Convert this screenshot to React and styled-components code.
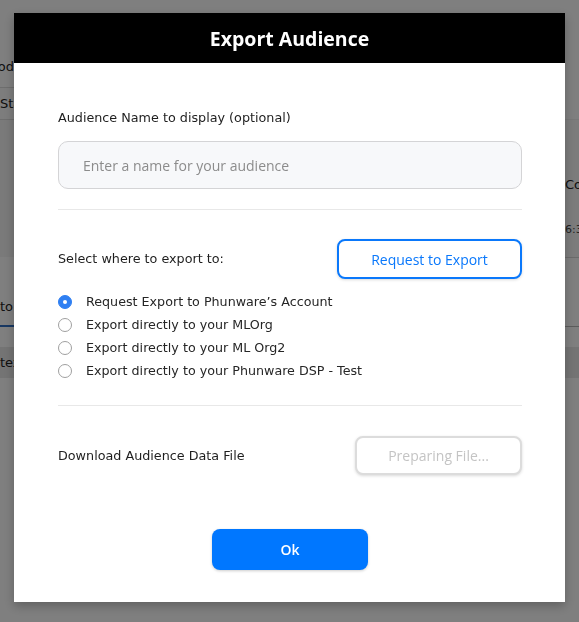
import React from "react";
import styled, { createGlobalStyle } from "styled-components";

const Global = createGlobalStyle`
  html, body { margin: 0; padding: 0; }
  body { width: 579px; height: 622px; overflow: hidden; background: #fff; font-family: "DejaVu Sans", sans-serif; }
  * { box-sizing: border-box; }
`;

/* ---------- page behind the dialog ---------- */
const Page = styled.div`
  display: flex;
  width: 579px;
  height: 622px;
  background: #fff;
`;
const Strip = styled.div`
  width: 14px;
  flex: none;
  display: flex;
  flex-direction: column;
  overflow: hidden;
`;
const Middle = styled.div`
  flex: 1;
`;
const Cell = styled.div`
  height: ${(p) => p.$h}px;
  flex: none;
  display: flex;
  align-items: ${(p) => p.$align || "center"};
  justify-content: ${(p) => (p.$end ? "flex-end" : "flex-start")};
  padding-bottom: ${(p) => p.$pb || 0}px;
  background: ${(p) => p.$bg || "#fff"};
  border-bottom: ${(p) => (p.$line ? `${p.$lw || 1}px solid ${p.$line}` : "none")};
  white-space: nowrap;
  font-family: "DejaVu Sans", sans-serif;
  font-size: ${(p) => p.$fs || 13}px;
  color: ${(p) => p.$color || "#222"};
`;
const Stack = styled.div`
  display: flex;
  flex-direction: column;
  padding-top: 57px;
  gap: 31px;
`;
const Small = styled.span`
  font-size: 11px;
  color: #444;
`;

/* ---------- dialog ---------- */
const Overlay = styled.div`
  position: fixed;
  inset: 0;
  background: rgba(0, 0, 0, 0.5);
  display: flex;
  justify-content: center;
  align-items: flex-start;
  padding-top: 13px;
`;
const Modal = styled.div`
  width: 551px;
  background: #fff;
  box-shadow: 0 4px 10px rgba(0, 0, 0, 0.25);
`;
const Header = styled.div`
  height: 50px;
  background: #000;
  color: #fff;
  display: flex;
  align-items: center;
  justify-content: center;
  font-family: "Open Sans", sans-serif;
  font-weight: 700;
  font-size: 19.5px;
`;
const Body = styled.div`
  padding: 47px 43px 32px 44px;
  display: flex;
  flex-direction: column;
`;
const Label = styled.div`
  font-family: "DejaVu Sans", sans-serif;
  font-size: 12.75px;
  line-height: 16px;
  color: #1e1e1e;
`;
const NameInput = styled.input`
  margin-top: 15px;
  height: 48px;
  width: 100%;
  border: 1px solid #d4d4d6;
  border-radius: 10px;
  background: #f7f8fa;
  padding: 0 24px;
  font-family: "Open Sans", sans-serif;
  font-size: 14px;
  color: #333;
  outline: none;
  &::placeholder { color: #8c8c8c; }
`;
const Divider = styled.hr`
  border: 0;
  border-top: 1px solid #e8e8e8;
  margin: ${(p) => p.$mt}px 0 0;
`;
const Row = styled.div`
  display: flex;
  align-items: center;
  justify-content: space-between;
  margin-top: ${(p) => p.$mt}px;
`;
const OutlineButton = styled.button`
  width: ${(p) => p.$w}px;
  height: ${(p) => p.$h}px;
  border-radius: 8px;
  background: #fff;
  border: 2px solid ${(p) => (p.disabled ? "#dcdcdc" : "#0a78fb")};
  color: ${(p) => (p.disabled ? "#c4c4c4" : "#0a78fb")};
  font-family: "Open Sans", sans-serif;
  font-size: 14px;
  font-weight: 500;
  box-shadow: 0 1px 3px rgba(0, 0, 0, 0.15);
  cursor: pointer;
`;
const RadioList = styled.div`
  margin-top: 11px;
  display: flex;
  flex-direction: column;
`;
const RadioItem = styled.label`
  height: 23px;
  display: flex;
  align-items: center;
  gap: 14px;
  font-family: "DejaVu Sans", sans-serif;
  font-size: 12.7px;
  color: #262626;
`;
const RadioDot = styled.span`
  width: 14px;
  height: 14px;
  flex: none;
  border-radius: 50%;
  display: flex;
  align-items: center;
  justify-content: center;
  background: ${(p) => (p.$on ? "#2f7ff2" : "#fff")};
  border: 1px solid ${(p) => (p.$on ? "#2f7ff2" : "#a0a0a0")};
  &::after {
    content: "";
    width: 4px;
    height: 4px;
    border-radius: 50%;
    background: #fff;
    display: ${(p) => (p.$on ? "block" : "none")};
  }
`;
const Footer = styled.div`
  display: flex;
  justify-content: center;
  margin-top: 54px;
`;
const PrimaryButton = styled.button`
  width: 156px;
  height: 41px;
  border: 0;
  border-radius: 8px;
  background: #0077ff;
  color: #fff;
  font-family: "Open Sans", sans-serif;
  font-size: 14px;
  font-weight: 600;
  box-shadow: 0 1px 3px rgba(0, 0, 0, 0.2);
  cursor: pointer;
`;

const options = [
  "Request Export to Phunware’s Account",
  "Export directly to your MLOrg",
  "Export directly to your ML Org2",
  "Export directly to your Phunware DSP - Test",
];

export default function App() {
  return (
    <>
      <Global />
      <Page>
        <Strip>
          <Cell $h={88} $align="flex-end" $pb={13} $end $line="#dcdcdc">Period</Cell>
          <Cell $h={32} $line="#dcdcdc" $bg="#fafafa">Status</Cell>
          <Cell $h={137} $bg="#f4f4f4" />
          <Cell $h={70} $align="flex-end" $pb={11} $line="#2f6fc4" $lw={2}>to</Cell>
          <Cell $h={20} />
          <Cell $h={31} $bg="#e8e8e8">text</Cell>
        </Strip>
        <Middle />
        <Strip>
          <Cell $h={120} $line="#f0f0f0" />
          <Cell $h={138} $align="flex-start" $bg="#f8f8f8" $line="#d6d6d6">
            <Stack>
              <span>Coins</span>
              <Small>6:30</Small>
            </Stack>
          </Cell>
          <Cell $h={69} $line="#b8b8b8" />
          <Cell $h={20} />
          <Cell $h={31} $bg="#e8e8e8" />
        </Strip>
      </Page>
      <Overlay>
        <Modal>
          <Header>Export Audience</Header>
          <Body>
            <Label>Audience Name to display (optional)</Label>
            <NameInput placeholder="Enter a name for your audience" />
            <Divider $mt={20} />
            <Row $mt={29}>
              <Label>Select where to export to:</Label>
              <OutlineButton $w={185} $h={40}>Request to Export</OutlineButton>
            </Row>
            <RadioList>
              {options.map((o, i) => (
                <RadioItem key={o}>
                  <RadioDot $on={i === 0} />
                  {o}
                </RadioItem>
              ))}
            </RadioList>
            <Divider $mt={23} />
            <Row $mt={30}>
              <Label>Download Audience Data File</Label>
              <OutlineButton $w={167} $h={39} disabled>Preparing File...</OutlineButton>
            </Row>
            <Footer>
              <PrimaryButton>Ok</PrimaryButton>
            </Footer>
          </Body>
        </Modal>
      </Overlay>
    </>
  );
}
